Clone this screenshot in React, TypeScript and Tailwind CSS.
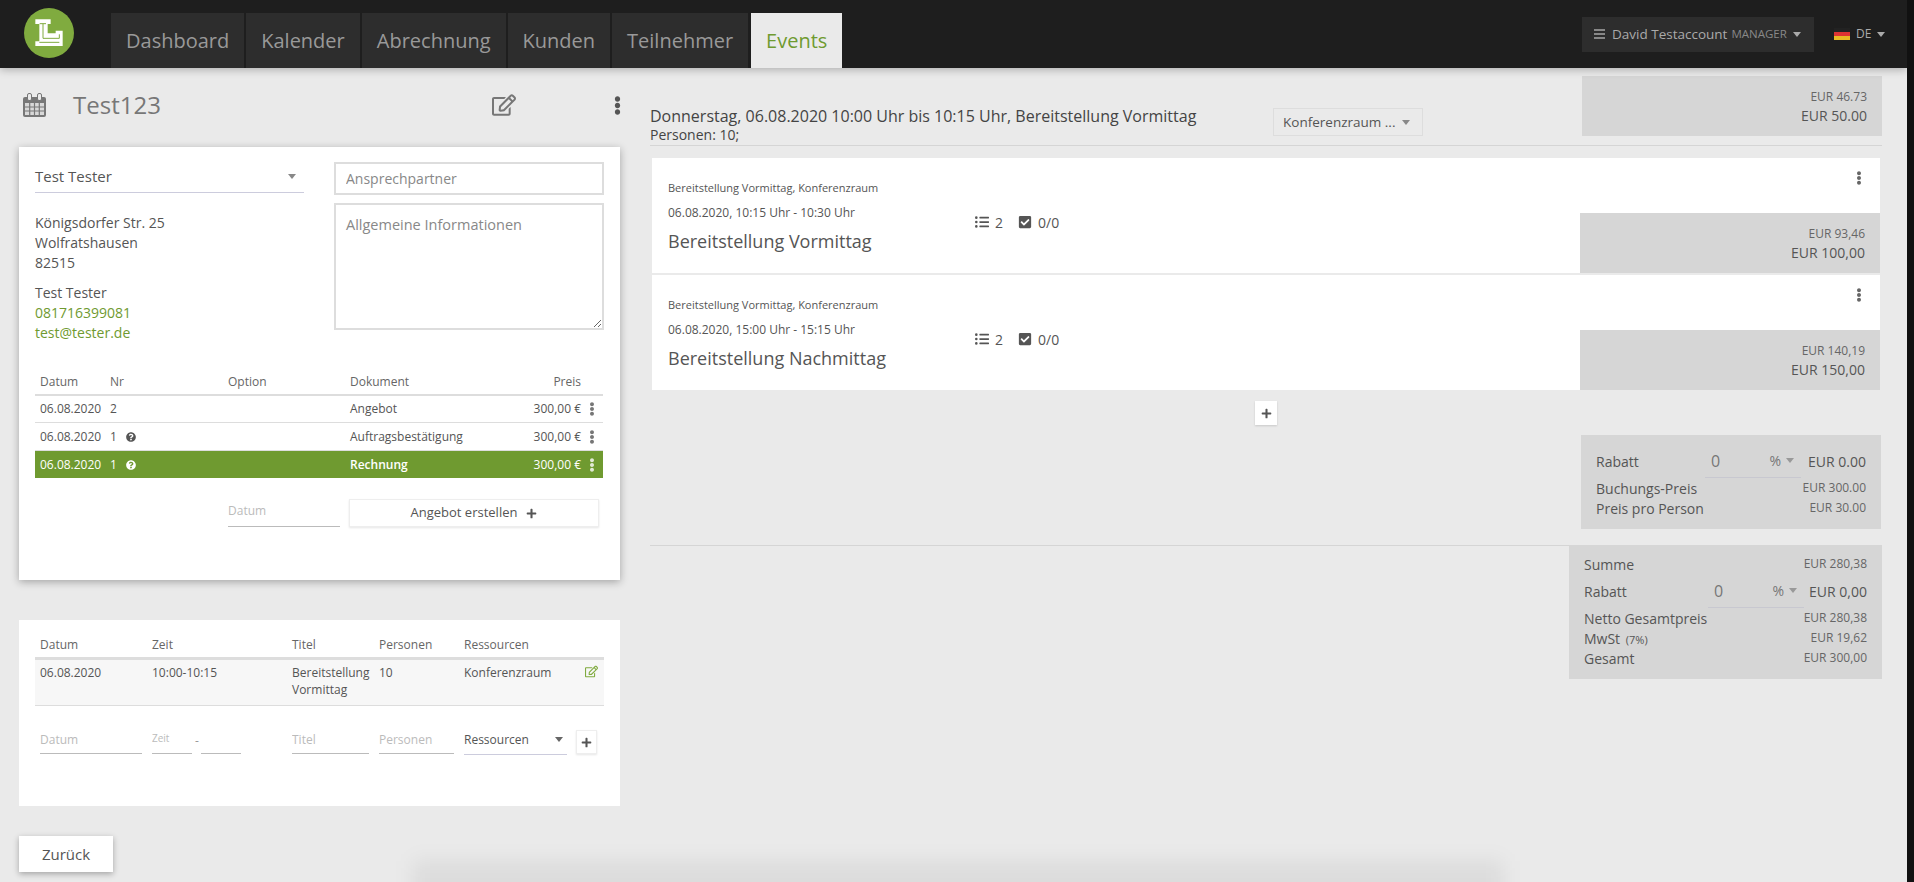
import { FaCheckSquare, FaEllipsisV, FaListUl, FaPlus, FaQuestionCircle, FaRegEdit } from "react-icons/fa";

const tabs = ["Dashboard", "Kalender", "Abrechnung", "Kunden", "Teilnehmer"];

const docs = [
  { nr: "2", doc: "Angebot", help: false, row: "h-[27px] border-b border-[#ddd]" },
  { nr: "1", doc: "Auftragsbestätigung", help: true, row: "h-[28px] border-b border-[#ddd]" },
  { nr: "1", doc: "Rechnung", help: true, row: "h-[27px] bg-[#6f9a30] text-white" },
];

const items = [
  { time: "06.08.2020, 10:15 Uhr - 10:30 Uhr", title: "Bereitstellung Vormittag", net: "EUR 93,46", gross: "EUR 100,00" },
  { time: "06.08.2020, 15:00 Uhr - 15:15 Uhr", title: "Bereitstellung Nachmittag", net: "EUR 140,19", gross: "EUR 150,00" },
];

function Caret({ className = "border-t-[#888]" }: { className?: string }) {
  return <span className={`inline-block h-0 w-0 border-x-[4px] border-t-[5px] border-x-transparent ${className}`} />;
}

function Logo() {
  return (
    <svg viewBox="42 24 150 150" className="mt-2 h-[50px] w-[50px] shrink-0 self-start">
      <circle cx="117" cy="99" r="75" fill="#80ab3f" />
      <path d="M76 58H122V72H113V100H137V92H158V138H76V124H88V72H76Z" fill="#fff" />
      <path d="M89 71H108M99 71V115H148V103M88 127H148" fill="none" stroke="#80ab3f" strokeWidth="3" />
    </svg>
  );
}

function CalendarIcon() {
  return (
    <svg viewBox="0 0 23 24" className="h-6 w-[23px]">
      <rect x="0" y="4" width="23" height="20" rx="2" fill="#777" />
      <path d="M2 10h19v12H2z" fill="#d8d8d8" />
      <path d="M6.7 10v12M11.5 10v12M16.3 10v12M2 14h19M2 18h19" stroke="#777" strokeWidth="1.2" />
      <rect x="4.5" y="0.5" width="4" height="7" rx="1.5" fill="#eaeaea" stroke="#777" />
      <rect x="14.5" y="0.5" width="4" height="7" rx="1.5" fill="#eaeaea" stroke="#777" />
    </svg>
  );
}

function Header() {
  return (
    <header className="relative z-10 flex h-[68px] shrink-0 items-end bg-[#1e1e1e] pl-6 shadow-[0_2px_8px_rgba(0,0,0,0.25)]">
      <Logo />
      <nav className="ml-[37px] flex gap-[2px]">
        {tabs.map((tab) => (
          <a key={tab} className="flex h-[55px] items-center bg-[#2d2d2d] px-[15px] text-[20px] text-[#999]">
            {tab}
          </a>
        ))}
        <a className="ml-px flex h-[55px] items-center bg-[#eaeaea] px-[15px] text-[20px] text-[#6f9a30]">Events</a>
      </nav>
      <div className="ml-auto mr-[20px] flex h-[35px] w-[232px] items-center self-center bg-[#2d2d2d] pl-[12px] text-[13.5px] text-[#aaa]">
        <span className="flex w-[11px] flex-col gap-[2px]">
          <span className="h-[2px] bg-[#888]" />
          <span className="h-[2px] bg-[#888]" />
          <span className="h-[2px] bg-[#888]" />
        </span>
        <span className="ml-[7px]">David Testaccount</span>
        <span className="ml-[4px] text-[11.5px] text-[#888]">MANAGER</span>
        <Caret className="ml-[6px] border-t-[#aaa]" />
      </div>
      <div className="mr-[8px] flex w-[65px] items-center self-center text-[12px] text-[#aaa]">
        <span className="flex h-[12px] w-[16px] flex-col">
          <span className="flex-1 bg-[#222]" />
          <span className="flex-1 bg-[#d33]" />
          <span className="flex-1 bg-[#e8b923]" />
        </span>
        <span className="ml-[6px]">DE</span>
        <Caret className="ml-[6px] border-t-[#aaa]" />
      </div>
    </header>
  );
}

function CustomerCard() {
  return (
    <section className="h-[433px] bg-white px-4 pt-[15px] shadow-[0_2px_8px_rgba(0,0,0,0.3)]">
      <div className="flex gap-[30px]">
        <div className="w-[269px]">
          <div className="flex h-[31px] items-center justify-between border-b border-[#ccd] pb-[2px] pr-[8px] text-[15px] text-[#555]">
            Test Tester
            <Caret />
          </div>
          <p className="mt-5 text-[14px] leading-5">
            Königsdorfer Str. 25
            <br />
            Wolfratshausen
            <br />
            82515
          </p>
          <p className="mt-[10px] text-[14px] leading-5">
            Test Tester
            <br />
            <span className="text-[#6f9a30]">081716399081</span>
            <br />
            <span className="text-[#6f9a30]">test@tester.de</span>
          </p>
        </div>
        <div className="w-[270px]">
          <input
            placeholder="Ansprechpartner"
            className="h-[33px] w-full border-2 border-[#ddd] px-[10px] text-[14px] placeholder:text-[#888]"
          />
          <textarea
            placeholder="Allgemeine Informationen"
            className="mt-2 block h-[127px] w-full border-2 border-[#ddd] px-[10px] pt-[9px] text-[14.5px] placeholder:text-[#888]"
          />
        </div>
      </div>
      <div className="mr-px mt-[25px] text-[12px]">
        <div className="grid h-[28px] grid-cols-[70px_118px_122px_1fr_80px_22px] items-center border-b-2 border-[#ddd] pl-[5px] pt-[2px] text-[#666]">
          <span>Datum</span>
          <span>Nr</span>
          <span>Option</span>
          <span>Dokument</span>
          <span className="text-right">Preis</span>
        </div>
        {docs.map((d) => (
          <div key={d.doc} className={`grid grid-cols-[70px_118px_122px_1fr_80px_22px] items-center pl-[5px] ${d.row}`}>
            <span>06.08.2020</span>
            <span className="flex items-center gap-[9px]">
              {d.nr}
              {d.help && <FaQuestionCircle className="text-[10px]" />}
            </span>
            <span />
            <span className={d.doc === "Rechnung" ? "font-semibold" : ""}>{d.doc}</span>
            <span className="text-right">300,00 €</span>
            <FaEllipsisV className="ml-[4px] text-[14px] opacity-80" />
          </div>
        ))}
      </div>
      <div className="mt-[21px] flex pl-[193px]">
        <input
          placeholder="Datum"
          className="h-[28px] w-[112px] border-b border-[#bbb] pb-[4px] text-[12px] placeholder:text-[#bbb]"
        />
        <button className="ml-[9px] flex h-[28px] w-[250px] items-center justify-center gap-[9px] border border-[#eee] text-[13px] shadow-[0_1px_2px_rgba(0,0,0,0.1)]">
          Angebot erstellen
          <FaPlus className="text-[11px]" />
        </button>
      </div>
    </section>
  );
}

function ScheduleCard() {
  return (
    <section className="mt-10 h-[186px] bg-white px-4 pt-3 text-[12px]">
      <div className="grid h-[28px] grid-cols-[112px_140px_87px_85px_1fr] items-center border-b-[3px] border-[#ddd] pl-[5px] text-[#666]">
        <span>Datum</span>
        <span>Zeit</span>
        <span>Titel</span>
        <span>Personen</span>
        <span>Ressourcen</span>
      </div>
      <div className="grid h-[46px] grid-cols-[112px_140px_87px_85px_1fr] border-b border-[#ddd] bg-[#f7f7f7] pl-[5px] pt-[4px] leading-[17px]">
        <span>06.08.2020</span>
        <span>10:00-10:15</span>
        <span>
          Bereitstellung
          <br />
          Vormittag
        </span>
        <span>10</span>
        <span className="flex justify-between pr-[6px]">
          Konferenzraum
          <FaRegEdit className="mt-[1px] text-[13px] text-[#80ab3f]" />
        </span>
      </div>
      <div className="mt-[24px] grid h-[24px] grid-cols-[112px_140px_87px_85px_1fr] pl-[5px]">
        <input placeholder="Datum" className="h-[24px] w-[102px] border-b border-[#bbb] pb-[5px] placeholder:text-[#bbb]" />
        <span className="flex items-start">
          <input placeholder="Zeit" className="h-[24px] w-[40px] border-b border-[#bbb] pb-[7px] text-[10px] placeholder:text-[#bbb]" />
          <span className="w-[9px] pl-[3px] pt-[2px] text-[#999]">-</span>
          <input className="h-[24px] w-[40px] border-b border-[#bbb]" />
        </span>
        <input placeholder="Titel" className="h-[24px] w-[77px] border-b border-[#bbb] pb-[5px] placeholder:text-[#bbb]" />
        <input placeholder="Personen" className="h-[24px] w-[75px] border-b border-[#bbb] pb-[5px] placeholder:text-[#bbb]" />
        <span className="flex items-start">
          <span className="flex h-[25px] w-[103px] items-center justify-between border-b border-[#ccd] pb-[5px] pr-[4px]">
            Ressourcen
            <Caret className="border-t-[#666]" />
          </span>
          <button className="ml-[9px] flex h-[24px] w-[21px] items-center justify-center border border-[#eee] shadow-[0_1px_2px_rgba(0,0,0,0.1)]">
            <FaPlus className="text-[11px]" />
          </button>
        </span>
      </div>
    </section>
  );
}

function PriceBlock({ net, gross, className }: { net: string; gross: string; className: string }) {
  return (
    <div className={`flex h-[60px] w-[300px] flex-col items-end justify-center bg-[#d6d6d6] pr-[15px] ${className}`}>
      <span className="text-[12px] leading-[19px] text-[#666]">{net}</span>
      <span className="text-[14px] leading-[20px]">{gross}</span>
    </div>
  );
}

function DiscountRow({ labelClass, amount }: { labelClass: string; amount: string }) {
  return (
    <div className="flex h-[34px] items-center text-[14px]">
      <span className={labelClass}>Rabatt</span>
      <span className="flex h-[34px] w-[96px] items-center border-b border-[#c8c8d0] pl-[6px] pr-[7px] text-[#777]">
        <span className="text-[16px]">0</span>
        <span className="ml-auto">%</span>
        <Caret className="ml-[5px] border-t-[#999]" />
      </span>
      <span className="ml-auto">{amount}</span>
    </div>
  );
}

function SumRow({ label, value }: { label: React.ReactNode; value: string }) {
  return (
    <div className="flex h-5 items-center justify-between text-[14px]">
      <span>{label}</span>
      <span className="text-[12px] text-[#666]">{value}</span>
    </div>
  );
}

export default function App() {
  return (
    <div className="relative flex h-[882px] overflow-hidden bg-[#eaeaea] font-['Open_Sans',sans-serif] text-[#555]">
      <div className="flex min-w-0 flex-1 flex-col">
        <Header />
        <main className="flex flex-1">
          <div className="ml-[19px] w-[601px] shrink-0">
            <div className="mb-[5px] flex h-[74px] items-center pl-[4px]">
              <CalendarIcon />
              <h1 className="ml-[27px] text-[24px] text-[#777]">Test123</h1>
              <FaRegEdit className="ml-auto mr-[92px] text-[24px] text-[#777]" />
              <FaEllipsisV className="mr-[-7px] text-[19px] text-[#555]" />
            </div>
            <CustomerCard />
            <ScheduleCard />
            <button className="mt-[30px] h-[36px] w-[94px] bg-white text-[15px] shadow-[0_2px_6px_rgba(0,0,0,0.3)]">Zurück</button>
          </div>

          <div className="ml-[30px] mr-[25px] min-w-0 flex-1">
            <div className="mt-2 flex h-[60px] items-end">
              <div className="mt-[30px] h-[38px] w-[623px] self-start">
                <div className="text-[16px] leading-[20px] text-[#444]">
                  Donnerstag, 06.08.2020 10:00 Uhr bis 10:15 Uhr, Bereitstellung Vormittag
                </div>
                <div className="text-[14px] leading-[18px] text-[#444]">Personen: 10;</div>
              </div>
              <div className="flex h-[28px] w-[150px] items-center justify-between border border-[#ddd] pl-[9px] pr-[12px] text-[13.5px]">
                Konferenzraum ...
                <Caret />
              </div>
              <PriceBlock net="EUR 46.73" gross="EUR 50.00" className="ml-auto" />
            </div>
            <div className="mt-[9px] h-px bg-[#d5d5d5]" />

            <div className="mx-[2px] mt-3 flex flex-col gap-[2px]">
              {items.map((item) => (
                <article key={item.title} className="relative flex h-[115px] bg-white pl-4 pt-[21px]">
                  <div className="w-[307px]">
                    <div className="text-[11px] leading-[18px]">Bereitstellung Vormittag, Konferenzraum</div>
                    <div className="mt-[7px] text-[12px] leading-[18px]">{item.time}</div>
                    <div className="mt-[6px] text-[18px] leading-[26px]">{item.title}</div>
                  </div>
                  <div className="mt-[33px] flex h-5 items-center text-[14px]">
                    <FaListUl className="text-[14px]" />
                    <span className="ml-[6px]">2</span>
                    <FaCheckSquare className="ml-[15px] text-[14px]" />
                    <span className="ml-[6px]">0/0</span>
                  </div>
                  <FaEllipsisV className="absolute right-[14px] top-[13px] text-[14px] text-[#666]" />
                  <PriceBlock net={item.net} gross={item.gross} className="absolute bottom-0 right-0" />
                </article>
              ))}
            </div>

            <button className="mx-auto mt-[11px] flex h-6 w-[22px] items-center justify-center bg-white shadow-[0_1px_2px_rgba(0,0,0,0.15)]">
              <FaPlus className="text-[11px]" />
            </button>

            <div className="ml-auto mr-px mt-[10px] h-[94px] w-[300px] bg-[#d6d6d6] px-[15px] pt-[9px]">
              <DiscountRow labelClass="w-[109px]" amount="EUR 0.00" />
              <SumRow label="Buchungs-Preis" value="EUR 300.00" />
              <SumRow label="Preis pro Person" value="EUR 30.00" />
            </div>

            <div className="mt-4 flex">
              <div className="h-px flex-1 bg-[#d5d5d5]" />
              <div className="h-[134px] w-[313px] bg-[#d6d6d6] px-[15px] pt-[9px]">
                <SumRow label="Summe" value="EUR 280,38" />
                <DiscountRow labelClass="w-[124px]" amount="EUR 0,00" />
                <SumRow label="Netto Gesamtpreis" value="EUR 280,38" />
                <SumRow
                  label={
                    <>
                      MwSt <span className="ml-[2px] text-[11px]">(7%)</span>
                    </>
                  }
                  value="EUR 19,62"
                />
                <SumRow label="Gesamt" value="EUR 300,00" />
              </div>
            </div>
          </div>
        </main>
      </div>
      <div className="z-20 w-[7px] shrink-0 bg-[#111]" />
      <div className="absolute left-[413px] top-[861px] h-[60px] w-[1090px] bg-black/[0.06] blur-[10px]" />
    </div>
  );
}
